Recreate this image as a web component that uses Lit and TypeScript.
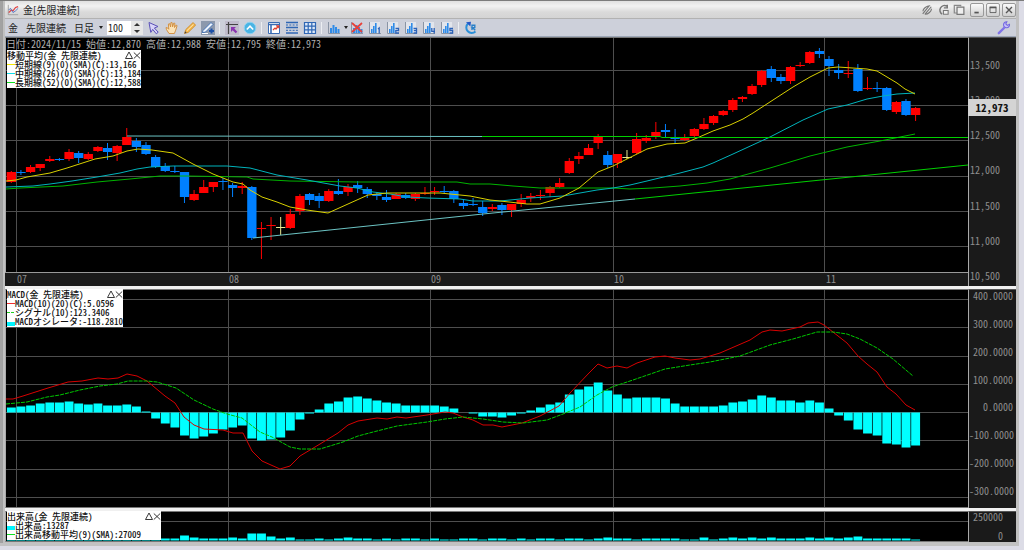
import { LitElement, html, svg, css, type TemplateResult } from "lit";
import { customElement, property } from "lit/decorators.js";
import { classMap } from "lit/directives/class-map.js";

type Kind = "u" | "d" | "n";
/** kind, high, body top, body bottom, low, in plot units */
type Candle = [Kind, number, number, number, number];

const FIRST_X = 11.3;
const STEP = 9.62;
const slotX = (i: number): number => FIRST_X + STEP * i;

const CANDLES: Candle[] = [
  ["u", 171, 172, 182, 183], ["d", 170, 172, 173, 175], ["u", 165, 167, 172, 173], ["u", 164, 164, 168, 171],
  ["u", 156, 159, 161, 162], ["d", 158, 159, 160, 161], ["u", 149, 152, 159, 161], ["d", 151, 153, 158, 163],
  ["u", 152, 154, 159, 160], ["u", 146, 147, 151, 152], ["d", 143, 148, 152, 160], ["u", 145, 146, 153, 161],
  ["u", 128, 137, 145, 145], ["d", 138, 141, 147, 152], ["d", 142, 145, 154, 155], ["d", 155, 157, 167, 168],
  ["d", 163, 166, 171, 172], ["d", 166, 171, 172, 173], ["d", 172, 172, 197, 203], ["u", 190, 194, 200, 201],
  ["u", 180, 187, 193, 193], ["u", 182, 182, 187, 192], ["d", 178, 181, 182, 190], ["d", 183, 185, 188, 197],
  ["u", 182, 186, 188, 194], ["d", 186, 187, 238, 240], ["u", 222, 228, 229, 259], ["u", 217, 225, 226, 240],
  ["n", 217, 227, 228, 235], ["u", 209, 214, 228, 229], ["u", 194, 196, 211, 215], ["d", 193, 194, 200, 205],
  ["d", 193, 196, 201, 208], ["u", 189, 191, 201, 202], ["d", 179, 191, 194, 195], ["u", 184, 187, 192, 196],
  ["d", 181, 185, 188, 193], ["d", 187, 189, 194, 198], ["d", 192, 194, 196, 200], ["d", 190, 197, 200, 202],
  ["u", 193, 194, 199, 199], ["d", 193, 195, 198, 199], ["u", 193, 194, 199, 201], ["u", 187, 193, 194, 195],
  ["u", 187, 191, 192, 195], ["d", 186, 191, 192, 193], ["d", 190, 191, 199, 203], ["d", 199, 203, 206, 209],
  ["d", 198, 204, 205, 206], ["d", 201, 207, 213, 216], ["u", 204, 207, 209, 211], ["d", 203, 205, 210, 215],
  ["u", 204, 204, 210, 217], ["u", 194, 200, 204, 207], ["u", 193, 196, 198, 202], ["u", 190, 195, 196, 200],
  ["u", 186, 187, 193, 197], ["u", 178, 183, 187, 188], ["u", 158, 161, 173, 174], ["u", 152, 156, 159, 164],
  ["u", 144, 148, 155, 155], ["u", 134, 137, 143, 149], ["d", 151, 155, 165, 168], ["u", 154, 154, 163, 168],
  ["n", 150, 157, 158, 159], ["u", 133, 139, 153, 154], ["u", 135, 138, 141, 143], ["u", 122, 132, 136, 139],
  ["d", 124, 130, 132, 138], ["d", 129, 138, 139, 144], ["u", 134, 137, 140, 141], ["u", 128, 129, 136, 138],
  ["u", 118, 124, 129, 130], ["u", 115, 116, 123, 125], ["u", 110, 111, 115, 116], ["u", 98, 100, 110, 112],
  ["u", 96, 97, 99, 102], ["u", 84, 86, 94, 95], ["u", 70, 71, 85, 87], ["d", 66, 69, 78, 82],
  ["d", 74, 77, 81, 84], ["u", 66, 67, 81, 84], ["u", 62, 65, 66, 67], ["u", 51, 52, 63, 64],
  ["d", 48, 51, 54, 58], ["d", 56, 59, 66, 76], ["d", 64, 70, 73, 79], ["u", 61, 73, 74, 78],
  ["d", 64, 69, 91, 92], ["u", 77, 88, 89, 90], ["d", 82, 88, 89, 92], ["d", 87, 88, 110, 111],
  ["u", 101, 102, 112, 114], ["d", 99, 101, 115, 116], ["u", 107, 108, 115, 121],
];

const SHORT_MA =
  "6,181 16,180 27,177 50,173 67,168 95,159 113,156 127,151 138,149 152,150 173,153 193,164 213,174 233,182 243,184 250,190 262,197 277,202 290,207 307,210 328,213 368,195 387,193 440,193 470,196 490,200 500,201 527,204 540,204 560,198 579,188 598,172 613,166 627,159 647,149 667,144 685,143 697,138 713,131 730,125 743,119 753,113 773,100 793,87 810,77 828,68 838,67 867,69 877,71 887,77 897,83 905,89 915,94";
const MID_MA =
  "6,187 33,186 50,184 72,181 97,177 120,173 137,169 150,167 173,166 227,166 250,168 277,175 307,180 340,186 357,188 373,192 390,194 407,197 427,198 460,199 473,201 500,201 530,198 563,196 580,193 597,190 613,188 630,185 647,181 680,173 703,167 713,163 733,154 770,137 803,120 828,109 847,105 867,99 883,96 897,94 915,93";
const LONG_MA =
  "6,189 20,188 63,186 97,182 130,179 160,176 187,176 247,177 253,179 290,181 357,182 457,182 470,184 490,184 513,186 540,188 563,188 613,188 630,189 653,188 680,186 707,183 730,179 770,168 810,156 847,147 880,141 915,134";

const MACD_LINE =
  "6,399 13,399 23,396 48,388 68,382 82,381 98,378 108,379 118,378 127,374 137,376 147,381 165,396 175,403 184,417 194,425 204,429 223,430 233,433 243,433 252,451 262,461 280,469 290,466 300,456 320,444 338,433 348,425 358,421 377,418 387,419 397,417 406,418 427,415 445,412 453,413 463,417 473,420 483,425 493,425 502,427 522,423 540,416 559,406 570,393 589,373 598,364 607,368 617,366 627,368 637,363 655,357 665,356 675,358 690,360 700,359 720,353 750,340 762,332 770,330 782,331 800,327 808,323 818,322 824,325 847,343 858,356 867,364 877,372 887,387 896,394 906,405 915,410";
const SIGNAL_LINE =
  "6,404 27,402 47,397 60,395 80,390 100,386 117,384 128,381 147,381 157,382 176,388 194,400 213,409 227,414 242,418 260,432 272,437 290,447 300,449 320,449 343,442 358,436 377,431 397,426 427,422 445,419 463,417 483,419 503,422 523,423 547,420 563,414 580,407 597,395 612,387 633,380 665,369 690,365 710,362 740,356 770,345 793,339 817,332 833,332 847,334 860,339 877,348 893,359 913,376";

const OSCILLATOR = [
  5, 6, 7, 9, 10, 10, 11, 9, 8, 9, 7, 7, 8, 6, 1, -6, -11, -15, -23, -26, -24, -21, -17, -15, -13, -26, -28, -27, -25,
  -18, -7, -1, 3, 9, 11, 15, 16, 14, 12, 10, 9, 7, 7, 7, 7, 6, 4, 0, -1, -4, -4, -5, -3, -1, 2, 5, 8, 10, 18, 23, 26,
  30, 22, 18, 14, 15, 15, 15, 14, 9, 6, 6, 6, 6, 7, 10, 11, 13, 17, 15, 12, 12, 10, 12, 10, 4, -3, -8, -17, -21, -23,
  -31, -32, -35, -33,
];

const VOLUME = [
  2, 2, 2, 2, 2, 2, 2, 2, 2, 2, 2, 2, 2, 2, 2, 2, 2, 2, 5, 3, 2, 2, 2, 3, 2, 7, 7, 4, 2, 3, 1, 1, 2, 1, 2, 3, 2, 2, 1,
  2, 1, 2, 2, 1, 2, 1, 1, 2, 2, 1, 2, 2, 1, 2, 1, 2, 2, 1, 2, 2, 1, 2, 3, 2, 2, 1, 2, 2, 2, 2, 1, 1, 3, 1, 2, 3, 2, 3,
  2, 3, 2, 2, 2, 3, 2, 3, 2, 3, 4, 2, 2, 2, 2, 2, 1,
];

const MONTH_X = [16, 228, 430, 613, 824];

/** ASCII runs are set in half-width forms, kanji and kana stay full width. */
const cells = (text: string) =>
  text.split(/([\x20-\x7e]+)/).filter(Boolean).map((run) =>
    /^[\x20-\x7e]/.test(run) ? html`<span class="hw">${run}</span>` : run
  );

const grid = (ys: number[], top: number, bottom: number) => svg`
  ${ys.map((y) => svg`<line class="rule" x1="6" x2="968" y1=${y} y2=${y} />`)}
  ${MONTH_X.map((x) => svg`<line class="rule" x1=${x + 0.5} x2=${x + 0.5} y1=${top} y2=${bottom} />`)}`;

const miniBars = svg`<path d="M1.5 1v11.5H13" fill="none" stroke="#8a94a4"/>
  <path d="M3 7h2v5H3zM5.5 4h2v8h-2zM8 6h2v6H8zM10.5 8h2v4h-2z" fill="#2f8be8"/>`;

const numbered = (d: string) => svg`<path d="M1 1h11v11.500H1z" fill="#e2e5ec"/>
  <path d="M1.5 1v11.5H13" fill="none" stroke="#8a94a4"/>
  <path d="M3 8h1.6v4H3zM5 5h1.6v7H5zM7 2h1.6v10H7z" fill="#2f8be8"/>
  <path d=${d} fill="none" stroke="#2b62b8" stroke-width="1.3"/>`;

const ICONS: Record<string, TemplateResult> = {
  app: svg`<path d="M1.5 1v11.5H13" fill="none" stroke="#999"/>
    <path d="M2 10l3-3 2 1 3-4 3-1" fill="none" stroke="#e04040" stroke-width="1.4"/>
    <path d="M2 7l2-2 3 5 3-2 3-3" fill="none" stroke="#4a70c8"/>`,
  cursor: svg`<path d="M2 1.5l9 4-3.6 1.5 3.8 4.2-1.9 1.6-3.6-4.4-1.9 3z" fill="#d8d4f8" stroke="#5a50b8"/>`,
  hand: svg`<path d="M4 12.5L1.5 8.6 1 6.6l1.6.3 1.2 1.4L3.4 3l1.2-.4 1 3.4.3-4.4h1.2l.5 4.2 1.2-3.8 1.1.3-.4 4.2 1.6-2.4 1 .5-1.4 4.6L9.4 12.5z" fill="#fbe3b8" stroke="#d08a38" stroke-width=".9"/>`,
  pencil: svg`<path d="M1.5 12.5l1.2-3.8L10 1.6l2.6 2.5L5.2 11.400z" fill="#f6b84a" stroke="#c98a2c" stroke-width=".9"/>
    <path d="M1.500 12.500l.7-2.200 1.500 1.500z" fill="#444"/><path d="M4 9.600l6.500-6.300" stroke="#fde9bd"/>`,
  draw: svg`<path d="M0 0h14v14H0z" fill="#8c98ac"/><path d="M2 9.500L10 1.500l2 2-7.500 7.500-3 .8z" fill="#eef4fc" stroke="#2c62b0" stroke-width=".8"/>
    <path d="M1 12.500h6" stroke="#fff"/><path d="M8 10h5M10.500 7.500v5" stroke="#1c50a8" stroke-width="2"/>`,
  cross: svg`<path d="M0 0h14v14H0z" fill="#c0bccc"/><path d="M3.500 1v12M1 3.500h12" stroke="#444" stroke-width="1.200"/>
    <path d="M6 6h5L9.300 7.600l3 3.100-1.600 1.500-3-3L6 11z" fill="#8a34b0"/>`,
  up: svg`<circle cx="7" cy="7" r="5.800" fill="#4ab4e4" stroke="#8cd0f0"/><path d="M3.800 8.500L7 5.200l3.200 3.300" fill="none" stroke="#fff" stroke-width="1.600"/>`,
  report: svg`<path d="M1.500 1.500h11v11h-11z" fill="#fff" stroke="#3a6cb4"/><path d="M1.500 3.500h11M4 3.500v9" stroke="#3a6cb4" stroke-width="1.600"/>
    <path d="M6 9l2-2 1 1 2.500-3M9 4.800h2.800v2.500" fill="none" stroke="#e04030" stroke-width="1.200"/>`,
  rows: svg`<path d="M1 1.500h12M1 6.500h12M1 12h12" stroke="#2f66b4" stroke-width="1.400"/>
    <path d="M1 4h12M1 9.300h12" stroke="#2f66b4" stroke-dasharray="2 1.300"/>`,
  table: svg`<path d="M1.500 1.500h11v11h-11zM1.500 5.200h11M1.500 8.800h11M5.200 1.500v11M8.800 1.500v11" fill="#dce8f8" stroke="#2f66b4" stroke-width="1.200"/>`,
  bars: miniBars,
  clear: svg`${miniBars}<path d="M2 2l10 9M12 2L2 11" stroke="#e84038" stroke-width="1.700"/>`,
  b1: numbered("M10 8l1.200-1v5.500"),
  b2: numbered("M9.500 7.500h3V9.700h-2.700V12h3.200"),
  b3: numbered("M9.500 7.500h3V12h-3M9.800 9.700h2.500"),
  b4: numbered("M9.800 7v3.300h3.200M12.200 7v5.500"),
  b5: numbered("M13 7.500H9.900v2h2.700V12H9.500"),
  reload: svg`<path d="M4 2.600A5 5 0 1 0 11.500 10.500" fill="none" stroke="#2a8fd8" stroke-width="2"/><path d="M2 1.200l5-.4-.6 4.600z" fill="#2358c8"/>
    <path d="M8 9V4.300h2.800v2.300H8.300l3 2.600" fill="none" stroke="#2a80c8" stroke-width="1.400"/>`,
  wrench: svg`<path d="M1.800 12.200L7.500 6.500" stroke="#8074e8" stroke-width="2.400" stroke-linecap="round"/>
    <path d="M12.500 3.300a3 3 0 1 1-2.600-2.500L8.800 2.800l1.500 1.600z" fill="#c8c2fa" stroke="#7468e0" stroke-width="1.100"/>`,
  clip: svg`<path d="M2 11.500L9.500 2.300M4.500 12.200l7.500-9M2.200 8.500c0-3 4.500-6.800 8.500-6.500M4.500 12c4 .2 7.600-3.500 7.800-6.500" fill="none" stroke="#777" stroke-width="1.300"/>`,
  linkback: svg`<path d="M11.500 2.500A5 5 0 1 0 6 11.800M12 .8v3.700H8" fill="none" stroke="#777" stroke-width="1.700"/><path d="M7.500 7.500H13V12H7.500z" fill="#eee" stroke="#777" stroke-width="1.200"/>`,
  windows: svg`<path d="M9 2.500V1.500H1.500v9h3" fill="none" stroke="#888" stroke-width="1.400"/><path d="M4.700 3.700h8v8.500h-8z" fill="#eee" stroke="#777" stroke-width="1.400"/>`,
  min: svg`<path d="M4 10h5" stroke="#555" stroke-width="2"/>`,
  max: svg`<path d="M3.500 4h7v6h-7z" fill="none" stroke="#555"/><path d="M3 4h8" stroke="#555" stroke-width="2"/>`,
  close: svg`<path d="M3.500 3.500l7 7M10.500 3.500l-7 7" stroke="#555" stroke-width="1.600"/>`,
};

const icon = (name: string) => html`<svg class="icon" viewBox="0 0 14 14" aria-hidden="true">${ICONS[name]}</svg>`;

interface Entry {
  mark: "yellow" | "cyan" | "green" | "red" | "dash" | "block";
  text: string;
}

@customElement("chart-legend")
export class ChartLegend extends LitElement {
  @property() heading = "";
  @property({ attribute: false }) entries: Entry[] = [];

  static styles = css`
    :host {
      display: block;
      background: #fff;
      color: #111;
      font: 500 9px/9px "Noto Sans CJK JP", sans-serif;
      white-space: nowrap;
      padding: 1px 0;
    }
    .hw { font-feature-settings: "hwid"; }
    .head { display: flex; align-items: center; }
    .title { flex: 1; }
    .row { display: flex; align-items: center; }
    .mark { flex: none; width: 8px; height: 1px; }
    .yellow { background: #f4e800; }
    .cyan { background: #10dce8; }
    .green { background: #10e020; }
    .red { background: #f03030; }
    .dash { background: repeating-linear-gradient(90deg, #20d020 0 3px, #fff 3px 4px); }
    .block { background: #00f4ff; height: 4px; align-self: end; }
    button { border: 0; padding: 0; background: none; width: 8px; height: 9px; display: block; }
    svg { display: block; width: 8px; height: 9px; }
  `;

  render() {
    return html`
      <div class="head">
        <span class="title">${cells(this.heading)}</span>
        <button aria-label="最小化"><svg viewBox="0 0 8 9"><path d="M.5 7.500h7L4 1z" fill="none" stroke="#222" stroke-width=".9"/></svg></button>
        <button aria-label="閉じる"><svg viewBox="0 0 8 9"><path d="M.8 1.500l6.400 6M7.200 1.500l-6.400 6" stroke="#222" stroke-width=".9"/></svg></button>
      </div>
      ${this.entries.map((e) => html`
        <div class="row"><span class="mark ${e.mark}"></span><span>${cells(e.text)}</span></div>`)}
    `;
  }
}

@customElement("app-root")
export class AppRoot extends LitElement {
  static styles = css`
    :host {
      display: block;
      height: 100vh;
      min-height: 360px;
      font: 10px/12px "Noto Sans CJK JP", sans-serif;
      color: #222;
    }
    * { box-sizing: border-box; }
    .hw { font-feature-settings: "hwid"; }
    .window {
      height: 100%;
      display: flex;
      flex-direction: column;
      padding: 0 8px 8px 5px;
      border-top: 1px solid #7c7c7c;
      background:
        linear-gradient(#dcdce6, #dcdce6) right / 5px 100% no-repeat,
        linear-gradient(#c2c2c2 3px, #dcdce6 3px) bottom / 100% 7px no-repeat,
        linear-gradient(90deg, #a2a2a2 2px, #808080 2px, #c0c0c0 3px);
    }
    button { border: 0; padding: 0; margin: 0; background: none; font: inherit; color: inherit; }
    .icon { display: block; width: 14px; height: 14px; }
    .titlebar {
      height: 18px;
      display: flex;
      align-items: center;
      padding-left: 2px;
      background: linear-gradient(#e0e0e0, #f2f2f2 5px, #dadada 11px, #d4d4d4);
      border-bottom: 1px solid #b2b2b2;
    }
    .titlebar .icon { width: 12px; height: 12px; }
    h1 { font: inherit; margin: 0 auto 0 4px; }
    .tools { display: flex; gap: 4px; margin-right: 5px; }
    .boxes { display: flex; gap: 2px; }
    .box {
      width: 14px;
      height: 14px;
      display: grid;
      place-items: center;
      border: 1px solid #999;
      border-radius: 2px;
      background: linear-gradient(#fafafa, #cfcfcf);
    }
    .toolbar {
      height: 18px;
      display: flex;
      align-items: center;
      padding-left: 3px;
      background: #cdd0da;
      border-bottom: 1px solid #9ca6b6;
    }
    .name { margin-left: 8px; }
    .period { margin: 0 4px 0 8px; display: flex; align-items: center; gap: 5px; }
    .caret { border: 2px solid transparent; border-top: 3px solid #222; border-bottom: 0; }
    .count { display: flex; width: 36px; height: 14px; background: #fff; margin: 0 2px 0 0; }
    .count input {
      border: 0;
      padding: 0 0 0 1px;
      width: 24px;
      min-width: 0;
      font: inherit;
      font-feature-settings: "hwid";
      background: #fff;
      color: #222;
      outline: 0;
    }
    .spin { flex: 1; display: grid; background: #e6e6e6; }
    .spin button { display: grid; place-items: center; }
    .upward { border: 3px solid transparent; border-bottom: 3px solid #333; border-top: 0; }
    .downward { border: 3px solid transparent; border-top: 3px solid #333; border-bottom: 0; }
    .tool { width: 18px; height: 16px; display: grid; place-items: center; }
    .drop { width: 5px; height: 14px; display: grid; place-items: center; }
    .sep { width: 1px; height: 12px; background: #eceef2; margin: 0 3px 0 2px; }
    .push { margin-left: auto; margin-right: 3px; }
    .panels { flex: 1; min-height: 0; display: flex; flex-direction: column; gap: 3px; background: #f0f0f0; }
    .panel {
      min-height: 0;
      display: grid;
      grid-template-columns: minmax(0, 1fr) 48px;
      grid-template-rows: minmax(0, 1fr);
      position: relative;
      background: #000;
    }
    .price { flex: 249 1 0; grid-template-rows: minmax(0, 1fr) 14px; }
    .macd { flex: 219 1 0; }
    .volume { flex: 31 1 0; }
    .plot { border: 1px solid #777; border-left-color: #a8a8a8; border-right: 0; min-height: 0; }
    .plot svg { display: block; width: 100%; height: 100%; }
    .price .plot { border-bottom: 0; }
    .months {
      display: grid;
      grid-template-columns: 12fr 212fr 202fr 183fr 212fr 142fr;
      background: #1a1a1a;
      border-top: 1px solid #999;
      color: #8e8e8e;
      line-height: 11px;
      font-feature-settings: "hwid";
    }
    .months span:first-child { grid-column-start: 2; }
    .scale {
      grid-column: 2;
      grid-row: 1 / -1;
      display: flex;
      flex-direction: column;
      justify-content: space-between;
      background: #1a1a1a;
      border-left: 1px solid #aaa;
      border-top: 1px solid #555;
      color: #8e8e8e;
      font-feature-settings: "hwid";
      min-height: 0;
    }
    .price .scale { padding: 21px 0 4px 1px; }
    .macd .scale { padding: 0 3px 11px 0; text-align: right; }
    .volume .scale { padding: 0 13px 1px 0; text-align: right; line-height: 10px; }
    .last {
      position: absolute;
      right: 0;
      top: 25%;
      width: 48px;
      font-size: 11px;
      line-height: 17px;
      background: #d4d4d4;
      color: #111;
      text-align: center;
      font-weight: 700;
      font-feature-settings: "hwid";
    }
    .quote {
      position: absolute;
      left: 1px;
      top: 1px;
      margin: 0;
      color: #b0b0b0;
      white-space: nowrap;
    }
    chart-legend { position: absolute; left: 2px; top: 0; }
    .price chart-legend { top: 13px; min-width: 132px; }
    .macd chart-legend { min-width: 116px; }
    .volume chart-legend { min-width: 154px; }
    .rule { stroke: #4e4e4e; stroke-width: 1; }
    .line { fill: none; stroke-width: 1; }
    .short { stroke: #d8d000; }
    .mid { stroke: #00b4bc; }
    .long { stroke: #00b400; }
    .trend { stroke: #6cc4c4; }
    .ext { stroke: #00d000; }
    .osc { stroke: #d80000; }
    .signal { stroke: #00c800; stroke-dasharray: 4 1; }
    .u { fill: #ff0000; }
    .d { fill: #0080ff; }
    .n { fill: #e8e890; }
    .bar { fill: #00ffff; }
  `;

  private tool(name: string, label: string, extra = "") {
    return html`<button class=${classMap({ tool: true, [extra || "plain"]: true })} aria-label=${label}>${icon(name)}</button>`;
  }

  private renderTitle() {
    return html`
      <header class="titlebar">
        ${icon("app")}
        <h1>金[先限連続]</h1>
        <div class="tools">
          <button aria-label="編集">${icon("clip")}</button>
          <button aria-label="連動">${icon("linkback")}</button>
          <button aria-label="複製">${icon("windows")}</button>
        </div>
        <div class="boxes">
          <button class="box" aria-label="最小化">${icon("min")}</button>
          <button class="box" aria-label="最大化">${icon("max")}</button>
          <button class="box" aria-label="閉じる">${icon("close")}</button>
        </div>
      </header>`;
  }

  private renderToolbar() {
    return html`
      <nav class="toolbar">
        <span>金</span><span class="name">先限連続</span>
        <button class="period">日足<span class="caret"></span></button>
        <div class="count">
          <input aria-label="本数" value="100" />
          <div class="spin">
            <button aria-label="増やす"><span class="upward"></span></button>
            <button aria-label="減らす"><span class="downward"></span></button>
          </div>
        </div>
        ${this.tool("cursor", "選択")}${this.tool("hand", "移動")}${this.tool("pencil", "描画")}${this.tool("draw", "ライン追加")}
        <span class="sep"></span>
        ${this.tool("cross", "十字カーソル")}${this.tool("up", "上へ")}
        <span class="sep"></span>
        ${this.tool("report", "チャート設定")}${this.tool("rows", "横罫線")}${this.tool("table", "格子")}
        <span class="sep"></span>
        ${this.tool("bars", "テクニカル")}
        <button class="drop" aria-label="テクニカル一覧"><span class="caret"></span></button>
        ${this.tool("clear", "全消去")}
        ${[1, 2, 3, 4, 5].map((n) => this.tool(`b${n}`, `パターン${n}`))}
        <span class="sep"></span>
        ${this.tool("reload", "更新")}
        ${this.tool("wrench", "設定", "push")}
      </nav>`;
  }

  private renderPrice() {
    return html`
      <section class="panel price">
        <div class="plot">
          <svg viewBox="6 38 962 234" preserveAspectRatio="none" role="img" aria-label="金 先限連続 日足">
            ${grid([70.5, 105.5, 140.5, 176.5, 211.5, 246.5], 38, 272)}
            ${CANDLES.map(([k, hi, top, bottom, lo], i) => svg`
              <rect class=${k} x=${slotX(i) - 0.5} y=${hi} width="1" height=${lo - hi} />
              <rect class=${k} x=${slotX(i) - 4.6} y=${top} width="9.3" height=${bottom - top} />`)}
            <polyline class="line long" points=${LONG_MA} />
            <polyline class="line mid" points=${MID_MA} />
            <polyline class="line short" points=${SHORT_MA} />
            <polyline class="line trend" points="127,136 482,136.500" />
            <polyline class="line ext" points="482,136.500 660,136.500 662,137.500 968,137.500" />
            <polyline class="line trend" points="253,238 483,214 635,199" />
            <polyline class="line ext" points="635,199 968,165" />
          </svg>
        </div>
        <div class="months">
          ${["07", "08", "09", "10", "11"].map((m) => html`<span>${m}</span>`)}
        </div>
        <div class="scale">
          ${["13,500", "13,000", "12,500", "12,000", "11,500", "11,000", "10,500"].map((v) => html`<span>${v}</span>`)}
        </div>
        <span class="last">12,973</span>
        <p class="quote">${cells("日付:2024/11/15 始値:12,870 高値:12,988 安値:12,795 終値:12,973")}</p>
        <chart-legend
          heading="移動平均(金 先限連続)"
          .entries=${[
            { mark: "yellow", text: "短期線(9)(0)(SMA)(C):13,166" },
            { mark: "cyan", text: "中期線(26)(0)(SMA)(C):13,184" },
            { mark: "green", text: "長期線(52)(0)(SMA)(C):12,588" },
          ]}
        ></chart-legend>
      </section>`;
  }

  private renderMacd() {
    const zero = 412.5;
    return html`
      <section class="panel macd">
        <div class="plot">
          <svg viewBox="6 290 962 217" preserveAspectRatio="none" role="img" aria-label="MACD">
            ${grid([299.5, 327.5, 356.5, 384.5, 412.5, 440.5, 469.5, 497.5], 290, 507)}
            ${OSCILLATOR.map((v, i) => svg`
              <rect class="bar" x=${slotX(i) - 4.4} y=${v > 0 ? zero - v : zero} width="8.9" height=${Math.abs(v)} />`)}
            <polyline class="line osc" points=${MACD_LINE} />
            <polyline class="line signal" points=${SIGNAL_LINE} />
          </svg>
        </div>
        <div class="scale">
          ${[4, 3, 2, 1, 0, -1, -2, -3].map((v) => html`<span>${(v * 100).toFixed(4)}</span>`)}
        </div>
        <chart-legend
          heading="MACD(金 先限連続)"
          .entries=${[
            { mark: "red", text: "MACD(10)(20)(C):5.0596" },
            { mark: "dash", text: "シグナル(10):123.3406" },
            { mark: "block", text: "MACDオシレータ:-118.2810" },
          ]}
        ></chart-legend>
      </section>`;
  }

  private renderVolume() {
    return html`
      <section class="panel volume">
        <div class="plot">
          <svg viewBox="6 512 962 29" preserveAspectRatio="none" role="img" aria-label="出来高">
            ${grid([521.5], 512, 541)}
            ${VOLUME.map((v, i) => svg`
              <rect class="bar" x=${slotX(i) - 4.4} y=${540.5 - v} width="8.9" height=${v} />`)}
          </svg>
        </div>
        <div class="scale"><span>250000</span><span>0</span></div>
        <chart-legend
          heading="出来高(金 先限連続)"
          .entries=${[
            { mark: "block", text: "出来高:13287" },
            { mark: "green", text: "出来高移動平均(9)(SMA):27009" },
          ]}
        ></chart-legend>
      </section>`;
  }

  render() {
    return html`
      <div class="window">
        ${this.renderTitle()} ${this.renderToolbar()}
        <main class="panels">${this.renderPrice()} ${this.renderMacd()} ${this.renderVolume()}</main>
      </div>`;
  }
}
